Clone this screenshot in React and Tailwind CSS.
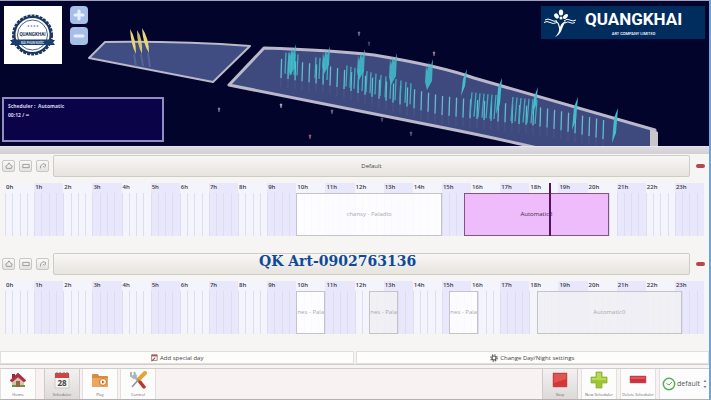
import React from 'react';

const HOURS = Array.from({ length: 24 }, (_, i) => i);

const DEFAULT_EVENTS = [
  { start: 10, end: 15, label: 'chansy - Paladio', tone: 'idle' },
  { start: 15.75, end: 20.75, label: 'Automatic3', tone: 'active' },
];

const SPECIAL_EVENTS = [
  { start: 10, end: 11, label: 'nes - Pala', tone: 'idle' },
  { start: 12.5, end: 13.5, label: 'nes - Pala', tone: 'muted' },
  { start: 15.25, end: 16.25, label: 'nes - Pala', tone: 'idle' },
  { start: 18.25, end: 23.25, label: 'Automatic0', tone: 'muted' },
];

const TONES = {
  idle: 'border-[#c4c3c8] bg-white/85 text-[#aaa9ae]',
  muted: 'border-[#c4c3c8] bg-[#efeff4]/90 text-[#aaa9ae]',
  active: 'border-[#80557f] bg-[#efbcfb] text-[#3b2540]',
};

// x and top of the small jets along the basin
const JET_LINE = [[281, 58], [333, 66], [420, 90], [442, 95], [545, 107], [608, 120]];

const TALL_JETS = [
  [288, 46, 75], [322, 48, 73], [357, 51, 79], [389, 55, 84], [425, 61, 89],
  [461, 68, 95], [496, 77, 113], [532, 86, 114], [572, 96, 129], [612, 107, 142],
];

const SPARKS = [
  [359, 33, '#7e7c98'], [369, 43, '#4b4a72'], [434, 53, '#a08b9c'], [281, 105, '#b8b6c8'],
  [332, 111, '#777594'], [310, 136, '#b0647a'], [382, 119, '#55547c'], [411, 133, '#66648a'],
  [219, 109, '#8a88a4'],
];

function jetTop(x) {
  const i = Math.max(1, JET_LINE.findIndex((p) => p[0] >= x));
  const [x0, y0] = JET_LINE[i - 1];
  const [x1, y1] = JET_LINE[i];
  return y0 + ((x - x0) / (x1 - x0)) * (y1 - y0);
}

function range(from, to, step) {
  const out = [];
  for (let x = from; x <= to; x += step) out.push(x);
  return out;
}

function Fountain() {
  return (
    <svg viewBox="0 0 709 145" className="block w-full bg-[#02042b]" aria-hidden="true">
      <g stroke="#bab8ca" strokeWidth="2" strokeLinejoin="round">
        <path d="M89 57 L105 41 Q180 40 250 45 L213 81 Z" fill="#3f4d83" />
        <path d="M229 84 L264 47 Q330 49 374 54 Q440 65 474 77 L655 129 V154 H566 Q520 142 440 126 Z" fill="#3e4a7d" strokeWidth="3" />
      </g>
      <path d="M650 128 L658 131 V145 H650 Z" fill="#c9c6c9" />
      <g stroke="#687da5" strokeWidth="1" opacity="0.5">
        {range(281, 608, 7).map((x) => (
          <line key={x} x1={x} y1={jetTop(x) + 18} x2={x} y2={jetTop(x) + 28} opacity="0.5" />
        ))}
        <path d="M134 53 l2 13 M141 53 l2 12 M148 52 l2 14" strokeWidth="2" />
      </g>
      <g stroke="#64bccf" strokeWidth="1.3">
        {range(281, 608, 7).map((x) => (
          <line key={x} x1={x + 0.6} y1={jetTop(x)} x2={x} y2={jetTop(x) + 19} />
        ))}
      </g>
      <g stroke="#3fafc0" strokeWidth="1.3">
        {[...range(346, 372, 4), ...range(375, 411, 5)].map((x) => (
          <line key={x} x1={x + 1} y1={jetTop(x) - 5} x2={x} y2={jetTop(x) + 16} />
        ))}
        {[...range(285, 297, 3), ...range(315, 330, 4)].map((x) => (
          <line key={x} x1={x + 1} y1={jetTop(x) - 7} x2={x} y2={jetTop(x) + 14} />
        ))}
        {[...range(470, 497, 4), ...range(511, 536, 4)].map((x) => (
          <line key={x} x1={x + 2} y1={jetTop(x) - 7} x2={x} y2={jetTop(x) + 17} />
        ))}
      </g>
      <g fill="#43bdcb">
        {TALL_JETS.slice(0, 5).map(([x, top, bottom]) => (
          <path key={x} d={`M${x} ${bottom - 8} L${x + 1} ${top + 3} l1 6 L${x + 4} ${top} l1 6 L${x + 8} ${top - 3} L${x + 7} ${bottom - 9} L${x + 2} ${bottom} Z`} opacity="0.85" />
        ))}
        {TALL_JETS.slice(5).map(([x, top, bottom]) => (
          <path key={x} d={`M${x} ${bottom} L${x + 2} ${top + 10} L${x + 6} ${top} L${x + 4} ${bottom - 10} Z`} />
        ))}
      </g>
      <g fill="#e8d874">
        <path d="M130 28 q6 9 6 25 q-5 -9 -6 -25Z" />
        <path d="M137 29 q6 8 5 24 q-5 -9 -5 -24Z" opacity="0.85" />
        <path d="M142 27 q7 10 7 25 q-6 -9 -7 -25Z" />
      </g>
      {SPARKS.map(([x, y, color]) => (
        <path key={x} d={`M${x - 1} ${y - 2} h2 l-1 4 Z`} fill={color} stroke={color} strokeWidth="0.5" />
      ))}
    </svg>
  );
}

function Seal() {
  return (
    <svg viewBox="0 0 58 58" className="h-[58px] w-[58px] bg-white" role="img" aria-label="Quangkhai seal">
      <circle cx="28.500" cy="29" r="19" fill="none" stroke="#1d3763" strokeWidth="3" strokeDasharray="3 1" />
      <circle cx="28.500" cy="29" r="18" fill="#fff" stroke="#1d3763" strokeWidth="2" />
      <circle cx="28.500" cy="29" r="15" fill="none" stroke="#1d3763" strokeWidth="0.8" />
      <path d="M6 34 h8 v5 H6 l2 -2.500 Z M43 34 h8 l-2 2.500 2 2.500 h-8 Z" fill="#122c58" />
      <rect x="8" y="33.500" width="41" height="5.500" fill="#1c3d70" />
      <text x="28.500" y="20.500" textAnchor="middle" fontSize="2.500" fill="#59677f" fontFamily="Roboto, sans-serif">★★★★</text>
      <text x="28.500" y="29.500" textAnchor="middle" fontSize="4.600" fontWeight="700" fill="#122c58" fontFamily="Roboto, sans-serif">QUANGKHAI</text>
      <text x="28.500" y="37.500" textAnchor="middle" fontSize="3" fontWeight="700" fill="#d8e2f0" fontFamily="Roboto, sans-serif">ĐÀI PHUN NƯỚC</text>
    </svg>
  );
}

function Brand() {
  return (
    <div className="flex h-[33px] w-[164px] items-center bg-[#002c5e] text-white">
      <svg viewBox="0 0 34 30" className="ml-0.5 h-[30px] w-[34px] shrink-0" aria-hidden="true">
        <g fill="#fff">
          <ellipse cx="18" cy="4.500" rx="2.200" ry="3" />
          <ellipse cx="13.500" cy="8" rx="2" ry="2.800" transform="rotate(-38 13.500 8)" />
          <ellipse cx="22.500" cy="8.500" rx="1.800" ry="3" transform="rotate(50 22.500 8.500)" />
          <circle cx="18" cy="10" r="1.500" />
          <path d="M11 12 Q16 13 17 19 Q19 13.500 23 13.500 Q20 17 19 21 Q17 27 12 29 Q17 24 16 20 Q15 14 11 12Z" />
        </g>
        <g fill="none" stroke="#fff" strokeWidth="1">
          <path d="M2 12 q3 -2 6 0 t6 1 M1 14.500 q3 -2 6 0 t7 0 M21 13 q3 -3 6 -1 t6 0 M22 15 q3 -2 5 -0.500 t5 0" />
        </g>
      </svg>
      <div className="ml-2 flex flex-col items-center gap-0.5">
        <span className="font-[Roboto,sans-serif] text-[17px] leading-5 font-bold">QUANGKHAI</span>
        <span className="font-[Roboto,sans-serif] text-[4px] leading-[6px] font-medium">ART COMPANY LIMITED</span>
      </div>
    </div>
  );
}

function ZoomButton({ label, children }) {
  return (
    <button aria-label={label} className="flex h-[18px] w-[18px] items-center justify-center rounded bg-[#a5bfe9]">
      <svg viewBox="0 0 12 12" className="h-3 w-3" stroke="#e9f1ff" strokeWidth="3" strokeLinecap="round">
        {children}
      </svg>
    </button>
  );
}

function Scene() {
  return (
    <section className="relative border-t border-[#a3a0bd]">
      <Fountain />
      <div className="absolute top-[5px] left-1 flex gap-2">
        <Seal />
        <div className="flex flex-col gap-[3px]">
          <ZoomButton label="Zoom in"><path d="M6 2v8M2 6h8" /></ZoomButton>
          <ZoomButton label="Zoom out"><path d="M2 6h8" /></ZoomButton>
        </div>
      </div>
      <div className="absolute top-[5px] right-1">
        <Brand />
      </div>
      <div className="absolute bottom-1 left-0.5 h-[45px] w-[162px] border-2 border-[#918dc4] bg-[#0a0348] px-1 py-[3px] font-['Open_Sans',sans-serif] text-[5px] leading-[9px] font-bold text-[#d6d3ee]">
        <p>Scheduler :&nbsp; Automatic</p>
        <p>00:12 / ∞</p>
      </div>
    </section>
  );
}

function SmallButton({ label, children }) {
  return (
    <button aria-label={label} className="flex h-3 w-[13px] items-center justify-center rounded-xs border border-[#c9c7c3] bg-linear-to-b from-[#faf9f8] to-[#e4e2de]">
      <svg viewBox="0 0 10 10" className="h-2 w-2" fill="none" stroke="#8c8a87" strokeWidth="1">
        {children}
      </svg>
    </button>
  );
}

function Timeline({ events, now }) {
  return (
    <div className="relative mx-[5px] mt-1.5">
      <div className="grid grid-cols-24">
        {HOURS.map((h) => (
          <div key={h} className={h % 2 ? 'bg-[#e8e7fc]' : 'bg-[#f4f4fd]'}>
            <div className="h-2.5 pl-px text-[6px] leading-[9px] font-semibold text-[#3d3b45]">{h}h</div>
            <div className="grid h-[43px] grid-cols-4">
              <i className="border-l border-[#dddded]" />
              <i className="border-l border-[#dddded]" />
              <i className="border-l border-[#dddded]" />
              <i className="border-l border-[#dddded]" />
            </div>
          </div>
        ))}
      </div>
      {events.map((e) => (
        <div
          key={e.start}
          className={`absolute top-2.5 bottom-0 flex items-center justify-center overflow-hidden border text-[6px] whitespace-nowrap ${TONES[e.tone]}`}
          style={{ left: `${(e.start / 24) * 100}%`, width: `${((e.end - e.start) / 24) * 100}%` }}
        >
          {e.label}
        </div>
      ))}
      {now && <div className="absolute inset-y-0 w-0.5 bg-[#53145c]" style={{ left: `${(now / 24) * 100}%` }} />}
    </div>
  );
}

function DaySchedule({ title, watermark, events, now }) {
  return (
    <section className="pb-[17px]">
      <div className="flex items-center gap-1 pr-[3px] pl-0.5">
        <SmallButton label="Rename"><path d="M2 8 1 5l2-1 2-3 2 3 2 1-1 3Z" /></SmallButton>
        <SmallButton label="Copy"><path d="M1 3h8v4H1Z" /></SmallButton>
        <SmallButton label="Paste"><path d="M2 8V5l3-3 3 1v3M5 5l2 2" /></SmallButton>
        <button aria-label={title || 'Special day'} className="h-[22px] flex-1 rounded-xs border border-[#cfccc6] bg-linear-to-b from-[#f8f7f5] to-[#e7e4df] text-[6px] text-[#45423f]">
          {title}
        </button>
        <button aria-label="Remove day" className="flex h-3 w-3 items-center justify-center">
          <span className="h-1 w-[9px] rounded-xs bg-[#b34752]" />
        </button>
      </div>
      {watermark && (
        <div className="relative h-0">
          <p className="absolute bottom-[5px] left-[259px] font-['DejaVu_Serif',serif] text-[14px] leading-[18px] font-bold whitespace-nowrap text-[#0f4a99]">
            {watermark}
          </p>
        </div>
      )}
      <Timeline events={events} now={now} />
    </section>
  );
}

function ToolButton({ label, pressed, children }) {
  return (
    <button
      className={`flex h-[30px] w-9 flex-col items-center justify-between border-x px-px pt-0.5 pb-px ${
        pressed ? 'border-[#d0cbcb] bg-linear-to-b from-[#f3f0f0] to-[#dedada]' : 'border-[#e4dfdf] bg-[#fdfcfc]'
      }`}
    >
      <svg viewBox="0 0 18 18" className="h-[18px] w-[18px]" aria-hidden="true">
        {children}
      </svg>
      <span className="text-[4px] leading-[6px] whitespace-nowrap text-[#666]">{label}</span>
    </button>
  );
}

function Toolbar() {
  return (
    <nav className="flex h-8 items-center border-y border-t-[#cfcccb] border-b-[#b5b1b1] bg-[#f8f2f2]">
      <ToolButton label="Home">
        <path d="M3 9 9 4l6 5v7H3Z" fill="#d5c5a4" />
        <path d="M3 3h3v4H3Z" fill="#9d2638" />
        <path d="M1 9.500 9 2l8 7.500-2 1.500-6-5-6 5Z" fill="#b52a43" stroke="#882034" strokeWidth="0.5" />
        <path d="M7 10h4v6H7Z" fill="#8d6750" />
        <path d="M3 14h4v2H3ZM11 14h5v2h-5Z" fill="#6c9648" />
      </ToolButton>
      <div className="ml-2 flex gap-0.5">
        <ToolButton label="Scheduler" pressed>
          <path d="M2 3h14v14H2Z" fill="#f4f4f4" stroke="#aaa" strokeWidth="0.5" />
          <path d="M2 2h14v5H2Z" fill="#cf4440" />
          <path d="M4 1v3M7 1v3M11 1v3M14 1v3" stroke="#8e6666" />
          <text x="9" y="14.500" textAnchor="middle" fontSize="8" fontWeight="700" fill="#444">28</text>
        </ToolButton>
        <ToolButton label="Play">
          <path d="M1 4q0-1 1-1h5l1 2h8q1 0 1 1v9q0 1-1 1H2q-1 0-1-1Z" fill="#d98b3c" />
          <path d="M1 7h16v8q0 1-1 1H2q-1 0-1-1Z" fill="#eca75c" />
          <circle cx="12" cy="11" r="3.500" fill="#fff0dc" stroke="#b67738" />
          <path d="m11 9.500 2.500 1.500-2.500 1.500Z" fill="#8d643d" />
        </ToolButton>
        <ToolButton label="Control">
          <path d="m4 4 11 12" stroke="#a6b1ba" strokeWidth="2.500" />
          <path d="M2 1v4l3 2 2-2-2-4" fill="none" stroke="#aab5bd" strokeWidth="2" />
          <path d="m16 2-6 6" stroke="#e3a535" strokeWidth="4" strokeLinecap="round" />
          <path d="m10 8-7 8" stroke="#8f9295" strokeWidth="1.500" />
          <path d="m11 11 4 5" stroke="#bd3930" strokeWidth="3.500" strokeLinecap="round" />
        </ToolButton>
      </div>
      <div className="ml-auto flex items-center gap-[3px]">
        <ToolButton label="Stop" pressed>
          <path d="M2 2h14v14H2Z" fill="#d33637" stroke="#b9555a" strokeWidth="0.5" />
          <path d="M3 3h12v5L3 12Z" fill="#df5550" />
        </ToolButton>
        <ToolButton label="New Scheduler">
          <path d="M6 1h6v5h5v6h-5v5H6v-5H1V6h5Z" fill="#9dc534" stroke="#83a92b" strokeWidth="0.7" />
          <path d="M7 2h4v5h5v2H2V7h5Z" fill="#b9d95b" />
        </ToolButton>
        <ToolButton label="Delete Scheduler">
          <path d="M1 5h16v7H1Z" fill="#cd3140" stroke="#b85a64" strokeWidth="0.5" />
          <path d="M2 6h14v2H2Z" fill="#dc5860" />
        </ToolButton>
        <label className="flex h-[30px] items-center border-l border-[#e4dfdf] bg-[#fdfcfc] pr-0.5 pl-0.5">
          <svg viewBox="0 0 14 14" className="mr-px h-3.5 w-3.5" fill="none" stroke="#57ad5b" strokeWidth="1.500" aria-hidden="true">
            <circle cx="7" cy="7" r="5.700" />
            <path d="M4.500 6.500 7 8l3-3" strokeWidth="1" />
          </svg>
          <select aria-label="Schedule" className="w-[26px] appearance-none bg-transparent text-[7px] text-[#555]">
            <option>default</option>
          </select>
          <svg viewBox="0 0 4 10" className="h-2.5 w-1" fill="#777" aria-hidden="true">
            <path d="m2 1 1.500 2h-3ZM2 9 .500 7h3Z" />
          </svg>
        </label>
      </div>
    </nav>
  );
}

export default function App() {
  return (
    <main className="w-full border-r-2 border-[#6fa3da] bg-[#f7f5f3] font-['Open_Sans',sans-serif]">
      <Scene />
      <div className="mb-px h-2 border-t border-[#e9e4f0] bg-linear-to-b from-[#dedce2] to-[#d1d0d2]" />
      <DaySchedule title="Default" events={DEFAULT_EVENTS} now={18.67} />
      <DaySchedule watermark="QK Art-0902763136" events={SPECIAL_EVENTS} />
      <div className="flex gap-0.5 border-b border-[#d2cfcb] text-[6px] leading-3 text-[#45423f]">
        <button className="flex h-[13px] flex-1 items-center justify-center gap-0.5 border border-[#e2dfdb] bg-[#fdfdfc]">
          <svg viewBox="0 0 10 10" className="h-2 w-2" aria-hidden="true">
            <path d="M2 1h7v7H2Z" fill="#fff" stroke="#777" />
            <path d="M2 1h7v2H2Z" fill="#c24a50" />
            <path d="m1 9 5-5 1 1-4 4Z" fill="#a54a54" />
          </svg>
          Add special day
        </button>
        <button className="flex h-[13px] flex-1 items-center justify-center gap-0.5 border border-[#e2dfdb] bg-[#fdfdfc]">
          <svg viewBox="0 0 10 10" className="h-2 w-2" fill="none" stroke="#555" aria-hidden="true">
            <circle cx="5" cy="5" r="2.500" strokeWidth="1.500" />
            <circle cx="5" cy="5" r="4" strokeWidth="1.500" strokeDasharray="1.570 1.570" />
          </svg>
          Change Day/Night settings
        </button>
      </div>
      <div className="pt-[3px]">
        <Toolbar />
      </div>
    </main>
  );
}
